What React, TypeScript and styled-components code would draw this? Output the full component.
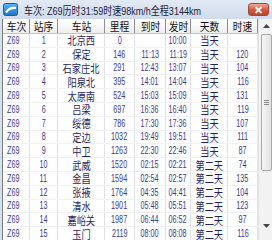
import styled, { createGlobalStyle } from "styled-components";

const GlobalStyle = createGlobalStyle`
  html, body {
    margin: 0;
    padding: 0;
    background: #ffffff;
  }
  body {
    width: 272px;
    height: 240px;
    overflow: hidden;
    font-family: "Liberation Sans", "Noto Sans CJK SC", sans-serif;
  }
`;

type Stop = {
  seq: number;
  station: string;
  km: number;
  arrive: string;
  depart: string;
  day: string;
  speed: string;
};

const stops: Stop[] = [
  { seq: 1, station: "北京西", km: 0, arrive: "", depart: "10:00", day: "当天", speed: "" },
  { seq: 2, station: "保定", km: 146, arrive: "11:13", depart: "11:19", day: "当天", speed: "120" },
  { seq: 3, station: "石家庄北", km: 291, arrive: "12:43", depart: "13:07", day: "当天", speed: "104" },
  { seq: 4, station: "阳泉北", km: 395, arrive: "14:01", depart: "14:04", day: "当天", speed: "116" },
  { seq: 5, station: "太原南", km: 524, arrive: "15:03", depart: "15:09", day: "当天", speed: "131" },
  { seq: 6, station: "吕梁", km: 697, arrive: "16:36", depart: "16:40", day: "当天", speed: "119" },
  { seq: 7, station: "绥德", km: 786, arrive: "17:30", depart: "17:36", day: "当天", speed: "107" },
  { seq: 8, station: "定边", km: 1032, arrive: "19:49", depart: "19:51", day: "当天", speed: "111" },
  { seq: 9, station: "中卫", km: 1263, arrive: "22:30", depart: "22:46", day: "当天", speed: "87" },
  { seq: 10, station: "武威", km: 1520, arrive: "02:15", depart: "02:21", day: "第二天", speed: "74" },
  { seq: 11, station: "金昌", km: 1594, arrive: "02:54", depart: "02:57", day: "第二天", speed: "135" },
  { seq: 12, station: "张掖", km: 1764, arrive: "04:35", depart: "04:41", day: "第二天", speed: "104" },
  { seq: 13, station: "清水", km: 1901, arrive: "05:48", depart: "05:51", day: "第二天", speed: "123" },
  { seq: 14, station: "嘉峪关", km: 1987, arrive: "06:44", depart: "06:52", day: "第二天", speed: "97" },
  { seq: 15, station: "玉门", km: 2119, arrive: "08:00", depart: "08:08", day: "第二天", speed: "116" },
];

const COLUMNS = "27px 28px 47px 30px 31px 25px 37px 30px";

function App() {
  return (
    <>
      <GlobalStyle />
      <Window>
        <TitleBar>
          <AppIcon width="15" height="13" viewBox="0 0 15 13">
            <defs>
              <linearGradient id="ico" x1="0" y1="0" x2="0" y2="1">
                <stop offset="0" stopColor="#5fb4ee" />
                <stop offset="1" stopColor="#1c74c4" />
              </linearGradient>
            </defs>
            <rect x="0.5" y="0.5" width="14" height="12" rx="2" fill="url(#ico)" stroke="#1a5f9e" />
            <path d="M2 9 C5 4 9 3 13 4 L13 6 C9 5.5 6 7 4 10 Z" fill="#ffffff" />
          </AppIcon>
          <Title>车次: Z69历时31:59时速98km/h全程3144km</Title>
          <CloseButton>
            <svg width="9" height="8" viewBox="0 0 9 8">
              <path d="M1.5 1 L7.5 7 M7.5 1 L1.5 7" stroke="#ffffff" strokeWidth="1.8" />
            </svg>
          </CloseButton>
        </TitleBar>
        <Body>
          <Table>
            <HeaderRow>
              {["车次", "站序", "车站", "里程", "到时", "发时", "天数", "时速"].map((h) => (
                <HeaderCell key={h}>
                  <Squeeze $scale={0.85}>{h}</Squeeze>
                </HeaderCell>
              ))}
            </HeaderRow>
            {stops.map((s) => (
              <Row key={s.seq}>
                <Cell $align="flex-start">
                  <Num $origin="left">Z69</Num>
                </Cell>
                <Cell>
                  <Num>{s.seq}</Num>
                </Cell>
                <Cell>
                  <Han>{s.station}</Han>
                </Cell>
                <Cell>
                  <Num>{s.km}</Num>
                </Cell>
                <Cell>
                  <Num>{s.arrive}</Num>
                </Cell>
                <Cell>
                  <Num>{s.depart}</Num>
                </Cell>
                <Cell>
                  <Han>{s.day}</Han>
                </Cell>
                <Cell>
                  <Num>{s.speed}</Num>
                </Cell>
              </Row>
            ))}
          </Table>
          <ScrollBar>
            <ScrollButton>
              <svg width="7" height="4" viewBox="0 0 7 4">
                <path d="M0 4 L3.5 0 L7 4 Z" fill="#444" />
              </svg>
            </ScrollButton>
            <Track>
              <Thumb>
                <Grip />
              </Thumb>
            </Track>
            <ScrollButton>
              <svg width="7" height="4" viewBox="0 0 7 4">
                <path d="M0 0 L7 0 L3.5 4 Z" fill="#444" />
              </svg>
            </ScrollButton>
          </ScrollBar>
        </Body>
      </Window>
    </>
  );
}

const Window = styled.div`
  width: 272px;
  height: 240px;
  display: flex;
  flex-direction: column;
  background: #d5e0ee;
  overflow: hidden;
`;

const TitleBar = styled.div`
  height: 19px;
  flex: none;
  display: flex;
  align-items: center;
  padding: 0 3px 0 3px;
  background: linear-gradient(#e2eaf5, #d0dcec);
`;

const AppIcon = styled.svg`
  flex: none;
`;

const Title = styled.span`
  display: inline-block;
  margin-left: 6px;
  font-size: 11px;
  color: #1c2036;
  white-space: nowrap;
  transform: scaleX(0.82);
  transform-origin: left center;
`;

const CloseButton = styled.div`
  margin-left: auto;
  width: 21px;
  height: 13px;
  box-sizing: border-box;
  border: 1px solid #9e4a3a;
  border-radius: 3px;
  background: linear-gradient(#eca996, #d0583c 55%, #c24328);
  display: flex;
  align-items: center;
  justify-content: center;
`;

const Body = styled.div`
  flex: 1;
  min-height: 0;
  display: flex;
  margin-left: 2px;
  border-left: 1px solid #7c7c7c;
  background: #ffffff;
`;

const Table = styled.div`
  width: 255px;
  flex: none;
  display: flex;
  flex-direction: column;
`;

const HeaderRow = styled.div`
  display: grid;
  grid-template-columns: ${COLUMNS};
  height: 15px;
  flex: none;
  box-sizing: border-box;
  border-bottom: 1px solid #c4c4c4;
  background: linear-gradient(#ffffff, #eeeeee);
`;

const HeaderCell = styled.div`
  display: flex;
  align-items: center;
  justify-content: center;
  border-right: 1px solid #8e8e8e;
  font-size: 11.5px;
  color: #111111;
  overflow: hidden;
`;

const Row = styled.div`
  display: grid;
  grid-template-columns: ${COLUMNS};
  height: 13.8px;
  flex: none;
  box-sizing: border-box;
  border-bottom: 1px solid #f0f1f5;
`;

const Cell = styled.div<{ $align?: string }>`
  display: flex;
  align-items: center;
  justify-content: ${(p) => p.$align ?? "center"};
  padding-left: ${(p) => (p.$align ? "4px" : "0")};
  border-right: 1px solid #dfe2ea;
  overflow: hidden;
  white-space: nowrap;
`;

const Squeeze = styled.span<{ $scale: number }>`
  display: inline-block;
  transform: scaleX(${(p) => p.$scale});
`;

const Num = styled.span<{ $origin?: string }>`
  display: inline-block;
  font-size: 10px;
  color: #3a3a92;
  transform: scaleX(0.72);
  transform-origin: ${(p) => p.$origin ?? "center"} center;
`;

const Han = styled.span`
  display: inline-block;
  font-size: 11.5px;
  color: #1f1f5c;
  transform: scaleX(0.8);
`;

const ScrollBar = styled.div`
  width: 14px;
  flex: none;
  display: flex;
  flex-direction: column;
  padding-bottom: 7px;
  background: #f2f2f2;
  border-left: 1px solid #e4e4e4;
`;

const ScrollButton = styled.div`
  height: 14px;
  flex: none;
  display: flex;
  align-items: center;
  justify-content: center;
`;

const Track = styled.div`
  flex: 1;
  padding: 1px 1px 0 2px;
`;

const Thumb = styled.div`
  height: 137px;
  box-sizing: border-box;
  border: 1px solid #a8a8a8;
  border-radius: 2px;
  background: linear-gradient(90deg, #f6f6f6, #e1e1e1);
  display: flex;
  align-items: center;
  justify-content: center;
`;

const Grip = styled.div`
  width: 5px;
  height: 5px;
  background: repeating-linear-gradient(#8a8a8a 0 1px, transparent 1px 2px);
`;

export default App;
